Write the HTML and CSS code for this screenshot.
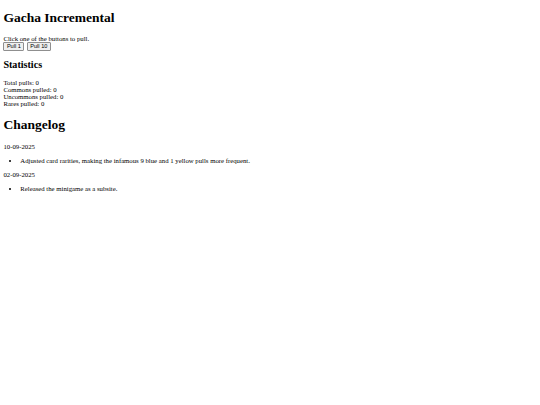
FILE: index.html
```html
<!DOCTYPE html>
<html>
<head>
    <title>Gacha Incremental</title>
    <link rel="stylesheet" href="styles.css">
</head>
<body>
    <h1 class="page-title">Gacha Incremental</h1>
    <div class="intro">Click one of the buttons to pull.</div>
    <div class="controls">
        <button class="pull-button">Pull 1</button>
        <button class="pull-button">Pull 10</button>
    </div>

    <h2>Statistics</h2>
    <div class="stats">
        <div>Total pulls: 0</div>
        <div>Commons pulled: 0</div>
        <div>Uncommons pulled: 0</div>
        <div>Rares pulled: 0</div>
    </div>

    <h1 class="changelog-title">Changelog</h1>
    <p>10-09-2025</p>
    <ul>
        <li>Adjusted card rarities, making the infamous 9 blue and 1 yellow pulls more frequent.</li>
    </ul>
    <p>02-09-2025</p>
    <ul>
        <li>Released the minigame as a subsite.</li>
    </ul>
</body>
</html>
```

FILE: styles.css
```css
body {
    font-family: "Liberation Serif", "Times New Roman", serif;
    font-size: 6.75px;
    line-height: normal;
    color: #000;
    background: #fff;
    margin: 3.4px;
}
h1 {
    font-size: 13.5px;
    margin: 9px 0;
}
.page-title {
    margin-top: 6.5px;
}
.changelog-title {
    margin: 10.5px 0 10px;
}
h2 {
    font-size: 10.1px;
    margin: 8.4px 0;
}
p {
    margin: 6.75px 0;
}
ul {
    margin: 6.75px 0;
    padding-left: 16.9px;
}
.controls {
    display: flex;
    gap: 2.4px;
}
.pull-button {
    font-family: "Liberation Sans", Arial, sans-serif;
    font-size: 5.6px;
    line-height: normal;
    padding: 0.6px 2.5px;
    background: #efefef;
    border: 0.85px solid #8f8f8f;
    border-radius: 1px;
    color: #000;
}
```
